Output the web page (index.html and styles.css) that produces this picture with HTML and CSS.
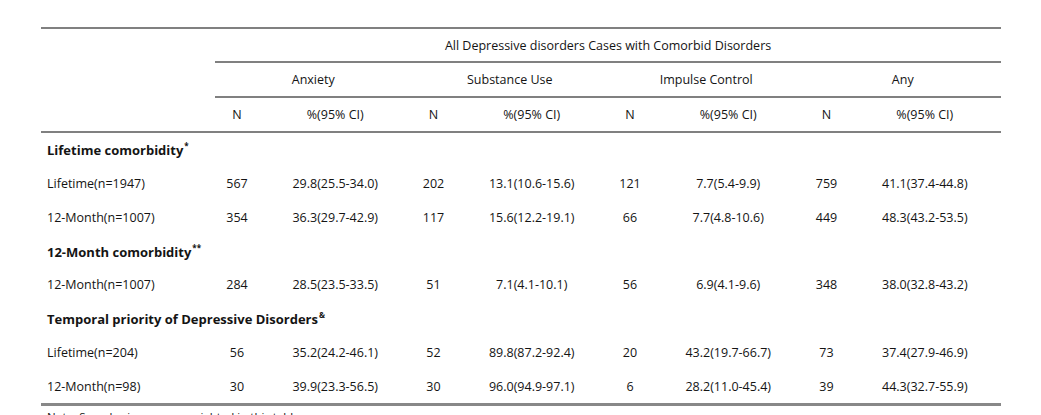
FILE: index.html
```html
<!DOCTYPE html>
<html lang="en">
<head>
<meta charset="utf-8">
<title>Comorbidity table</title>
<link rel="stylesheet" href="styles.css">
</head>
<body>
<div class="page">
  <table class="tbl">
    <colgroup>
      <col class="c-label">
      <col class="c-n"><col class="c-p">
      <col class="c-n"><col class="c-p">
      <col class="c-n"><col class="c-p">
      <col class="c-n"><col class="c-p">
    </colgroup>
    <thead>
      <tr class="h1">
        <th class="corner" rowspan="3"></th>
        <th class="span ruled" colspan="8">All Depressive disorders Cases with Comorbid Disorders</th>
      </tr>
      <tr class="h2">
        <th class="ruled" colspan="2">Anxiety</th>
        <th class="ruled" colspan="2">Substance Use</th>
        <th class="ruled" colspan="2">Impulse Control</th>
        <th class="ruled" colspan="2">Any</th>
      </tr>
      <tr class="h3">
        <th class="ruled">N</th><th class="ruled">%(95% CI)</th>
        <th class="ruled">N</th><th class="ruled">%(95% CI)</th>
        <th class="ruled">N</th><th class="ruled">%(95% CI)</th>
        <th class="ruled">N</th><th class="ruled">%(95% CI)</th>
      </tr>
    </thead>
    <tbody>
      <tr class="sec"><td class="lbl" colspan="9"><b>Lifetime comorbidity</b><sup>*</sup></td></tr>
      <tr><td class="lbl">Lifetime(n=1947)</td><td>567</td><td>29.8(25.5-34.0)</td><td>202</td><td>13.1(10.6-15.6)</td><td>121</td><td>7.7(5.4-9.9)</td><td>759</td><td>41.1(37.4-44.8)</td></tr>
      <tr><td class="lbl">12-Month(n=1007)</td><td>354</td><td>36.3(29.7-42.9)</td><td>117</td><td>15.6(12.2-19.1)</td><td>66</td><td>7.7(4.8-10.6)</td><td>449</td><td>48.3(43.2-53.5)</td></tr>
      <tr class="sec"><td class="lbl" colspan="9"><b>12-Month comorbidity</b><sup>**</sup></td></tr>
      <tr><td class="lbl">12-Month(n=1007)</td><td>284</td><td>28.5(23.5-33.5)</td><td>51</td><td>7.1(4.1-10.1)</td><td>56</td><td>6.9(4.1-9.6)</td><td>348</td><td>38.0(32.8-43.2)</td></tr>
      <tr class="sec"><td class="lbl" colspan="9"><b>Temporal priority of Depressive Disorders</b><sup>&amp;</sup></td></tr>
      <tr><td class="lbl">Lifetime(n=204)</td><td>56</td><td>35.2(24.2-46.1)</td><td>52</td><td>89.8(87.2-92.4)</td><td>20</td><td>43.2(19.7-66.7)</td><td>73</td><td>37.4(27.9-46.9)</td></tr>
      <tr class="last"><td class="lbl">12-Month(n=98)</td><td>30</td><td>39.9(23.3-56.5)</td><td>30</td><td>96.0(94.9-97.1)</td><td>6</td><td>28.2(11.0-45.4)</td><td>39</td><td>44.3(32.7-55.9)</td></tr>
    </tbody>
  </table>
  <p class="note">Note: Sample sizes are unweighted in this table.</p>
</div>
</body>
</html>
```
FILE: styles.css
```css
html, body {
  margin: 0;
  padding: 0;
  background: #ffffff;
}
.page {
  padding: 27px 0 0 41px;
  font-family: "Open Sans", Lato, sans-serif;
  font-size: 12.5px;
  color: #141414;
}
.tbl {
  width: 960px;
  table-layout: fixed;
  border-collapse: separate;
  border-spacing: 0;
  border-top: 2px solid #808080;
  border-bottom: 3px solid #888888;
}
.c-label { width: 174px; }
.c-n { width: 44px; }
.c-p { width: 152.5px; }
th, td {
  padding: 0;
  text-align: center;
  vertical-align: middle;
  font-weight: normal;
  white-space: nowrap;
}
.ruled { border-bottom: 2px solid #808080; }
.corner { border-bottom: 2px solid #808080; }
.h1 th { height: 32px; }
.h2 th { height: 33px; }
.h3 th { height: 33px; }
tbody td { height: 33.75px; }
.lbl {
  text-align: left;
  padding-left: 6px;
}
.sec .lbl b {
  font-weight: 700;
  font-size: 13px;
}
sup {
  font-size: 8px;
  font-weight: 700;
  vertical-align: 6px;
  margin-left: 1px;
}
.note {
  margin: 3px 0 0 6px;
  font-size: 11.5px;
}
```
